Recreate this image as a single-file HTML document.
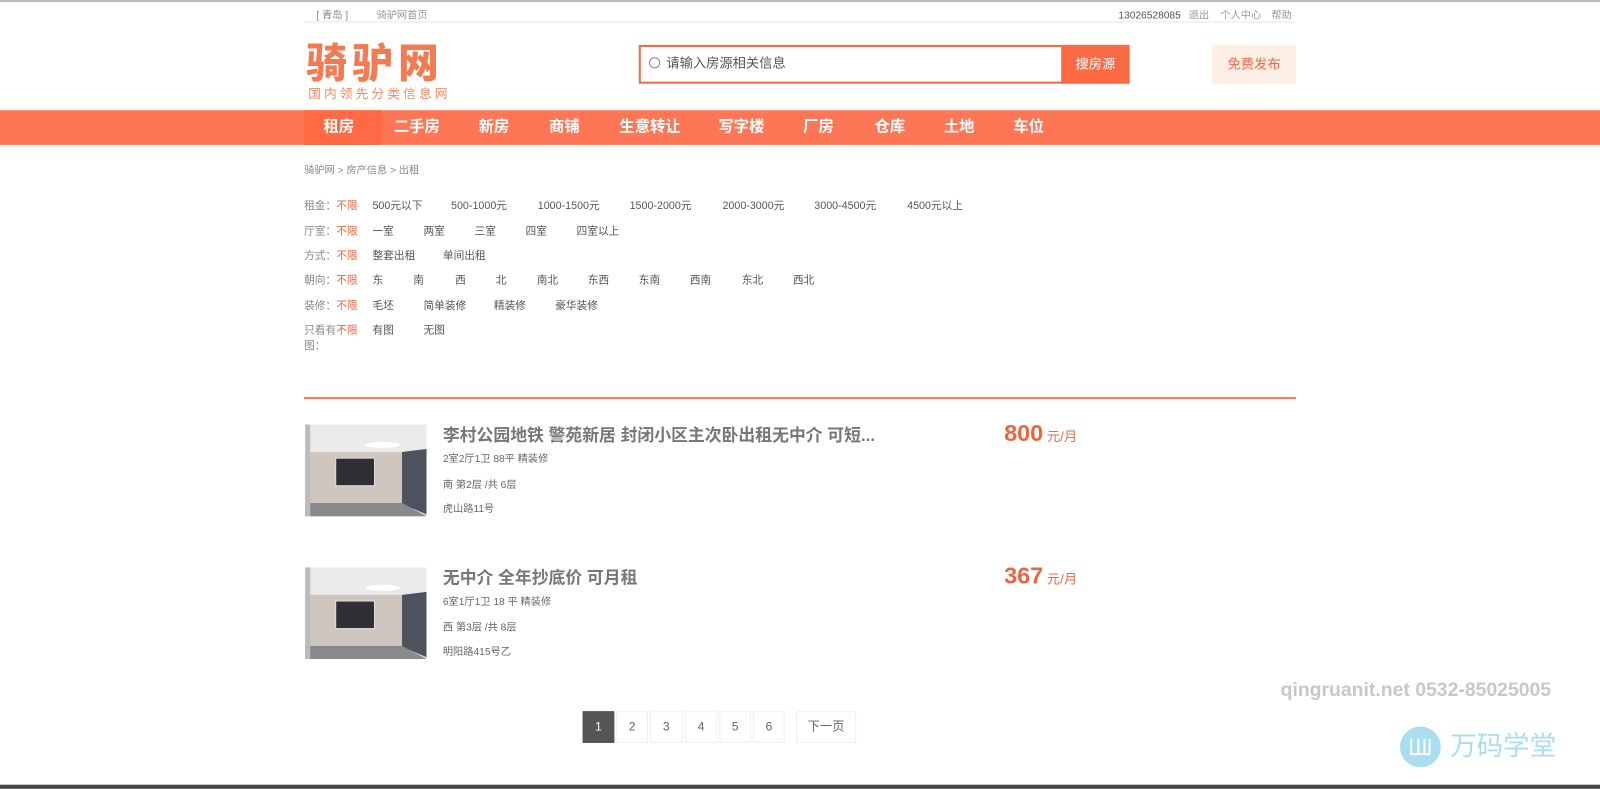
<!DOCTYPE html>
<html><head><meta charset="utf-8"><style>
*{margin:0;padding:0;box-sizing:border-box}
body{width:1600px;height:788px;position:relative;background:#fff;font-family:"Liberation Sans","Noto Sans CJK SC",sans-serif;overflow:hidden;color:#555}
#w{position:absolute;left:0;top:0;width:1568px;height:772px;transform:scale(1.0204);transform-origin:0 0}
.a{position:absolute;white-space:nowrap}
.s{font-size:10px;color:#666;line-height:12px}
.nav span{position:absolute;top:0;line-height:34px;color:#fff;font-weight:bold;font-size:15px}
.row{position:absolute;left:298px;font-size:10.5px;color:#555;line-height:12px}
.row span{position:absolute;white-space:nowrap}
.row .l{left:0;color:#888}
.row .l b{font-weight:normal;color:#f0643c}
.pg{position:absolute;top:697px;height:31px;border:1px solid #eee;text-align:center;line-height:29px;font-size:12px;color:#666}
.t{font-size:16.5px;font-weight:bold;color:#777;line-height:22px}
</style></head><body><div id="w">
<div class="a" style="left:0;top:0;width:1600px;height:2px;background:#bbb"></div>
<div class="a s" style="left:310px;top:10px;color:#888">[ 青岛 ]</div>
<div class="a s" style="left:369px;top:10px;color:#999">骑驴网首页</div>
<div class="a" style="left:298px;top:21px;width:972px;height:1px;background:#e6e6e6"></div>
<div class="a s" style="left:1096px;top:10px;color:#555">13026528085</div>
<div class="a s" style="left:1165px;top:10px;color:#999">退出</div>
<div class="a s" style="left:1196px;top:10px;color:#999">个人中心</div>
<div class="a s" style="left:1246px;top:10px;color:#999">帮助</div>

<div class="a" style="left:300px;top:40px;font-size:40px;font-weight:900;color:#f47a52;letter-spacing:5px;line-height:46px">骑驴网</div>
<div class="a" style="left:302px;top:84px;font-size:12.5px;color:#f58a66;letter-spacing:3px;line-height:16px">国内领先分类信息网</div>

<div class="a" style="left:626px;top:44px;width:481px;height:38px;border:2px solid #f06a46;background:#fff"></div>
<div class="a" style="left:636px;top:56px;width:11px;height:11px;border:1px solid #888;border-radius:50%"></div>
<div class="a" style="left:653px;top:54px;font-size:13px;color:#555;line-height:16px">请输入房源相关信息</div>
<div class="a" style="left:1040px;top:44px;width:67px;height:38px;background:#fa6a45;color:#fff;font-size:13px;text-align:center;line-height:38px">搜房源</div>
<div class="a" style="left:1188px;top:44px;width:82px;height:38px;background:#fdeee6;color:#f06a46;font-size:13px;text-align:center;line-height:38px">免费发布</div>

<div class="a nav" style="left:0;top:108px;width:1600px;height:34px;background:#ff7657">
<div class="a" style="left:298px;top:0;width:76px;height:34px;background:#ff6a45"></div>
<span style="left:317px">租房</span><span style="left:386px">二手房</span><span style="left:469px">新房</span><span style="left:538px">商铺</span><span style="left:607px">生意转让</span><span style="left:704px">写字楼</span><span style="left:787px">厂房</span><span style="left:857px">仓库</span><span style="left:925px">土地</span><span style="left:993px">车位</span>
</div>

<div class="a s" style="left:298px;top:162px;color:#888">骑驴网 &gt; 房产信息 &gt; 出租</div>

<div class="row" style="top:196px"><span class="l">租金：<b>不限</b></span><span style="left:67px">500元以下</span><span style="left:144px">500-1000元</span><span style="left:229px">1000-1500元</span><span style="left:319px">1500-2000元</span><span style="left:410px">2000-3000元</span><span style="left:500px">3000-4500元</span><span style="left:591px">4500元以上</span></div>
<div class="row" style="top:221px"><span class="l">厅室：<b>不限</b></span><span style="left:67px">一室</span><span style="left:117px">两室</span><span style="left:167px">三室</span><span style="left:217px">四室</span><span style="left:267px">四室以上</span></div>
<div class="row" style="top:245px"><span class="l">方式：<b>不限</b></span><span style="left:67px">整套出租</span><span style="left:136px">单间出租</span></div>
<div class="row" style="top:269px"><span class="l">朝向：<b>不限</b></span><span style="left:67px">东</span><span style="left:107px">南</span><span style="left:148px">西</span><span style="left:188px">北</span><span style="left:228px">南北</span><span style="left:278px">东西</span><span style="left:328px">东南</span><span style="left:378px">西南</span><span style="left:429px">东北</span><span style="left:479px">西北</span></div>
<div class="row" style="top:294px"><span class="l">装修：<b>不限</b></span><span style="left:67px">毛坯</span><span style="left:117px">简单装修</span><span style="left:186px">精装修</span><span style="left:246px">豪华装修</span></div>
<div class="row" style="top:318px"><span class="l">只看有<b>不限</b></span><span class="l" style="top:15px">图：</span><span style="left:67px">有图</span><span style="left:117px">无图</span></div>

<div class="a" style="left:298px;top:389px;width:972px;height:2px;background:#fa7a5a"></div>

<svg class="a" style="left:299px;top:416px" width="119" height="90" viewBox="0 0 119 90">
<rect width="119" height="90" fill="#d6d4d0"/><polygon points="0,0 119,0 119,27 0,27" fill="#eaeaea"/>
<polygon points="0,27 95,27 95,77 0,77" fill="#cfc7bf"/><polygon points="95,27 119,24 119,88 95,78" fill="#4d525c"/>
<polygon points="0,77 95,77 119,90 0,90" fill="#8a8a8c"/><rect x="30" y="33" width="38" height="27" fill="#2f3036" stroke="#ddd"/>
<ellipse cx="76" cy="20" rx="17" ry="3" fill="#fff"/><rect x="0" y="0" width="5" height="90" fill="#bbb"/></svg>
<div class="a t" style="left:434px;top:416px">李村公园地铁 警苑新居 封闭小区主次卧出租无中介 可短...</div>
<div class="a s" style="left:434px;top:445px">2室2厅1卫 88平 精装修</div>
<div class="a s" style="left:434px;top:470px">南 第2层 /共 6层</div>
<div class="a s" style="left:434px;top:494px">虎山路11号</div>
<div class="a" style="left:984px;top:410px;font-size:23px;font-weight:bold;color:#f0643c;line-height:28px">800<span style="font-size:13px;font-weight:normal;color:#f06a46"> 元/月</span></div>

<svg class="a" style="left:299px;top:556px" width="119" height="90" viewBox="0 0 119 90">
<rect width="119" height="90" fill="#d6d4d0"/><polygon points="0,0 119,0 119,27 0,27" fill="#eaeaea"/>
<polygon points="0,27 95,27 95,77 0,77" fill="#cfc7bf"/><polygon points="95,27 119,24 119,88 95,78" fill="#4d525c"/>
<polygon points="0,77 95,77 119,90 0,90" fill="#8a8a8c"/><rect x="30" y="33" width="38" height="27" fill="#2f3036" stroke="#ddd"/>
<ellipse cx="76" cy="20" rx="17" ry="3" fill="#fff"/><rect x="0" y="0" width="5" height="90" fill="#bbb"/></svg>
<div class="a t" style="left:434px;top:556px">无中介 全年抄底价 可月租</div>
<div class="a s" style="left:434px;top:585px">6室1厅1卫 18 平 精装修</div>
<div class="a s" style="left:434px;top:610px">西 第3层 /共 8层</div>
<div class="a s" style="left:434px;top:634px">明阳路415号乙</div>
<div class="a" style="left:984px;top:550px;font-size:23px;font-weight:bold;color:#f0643c;line-height:28px">367<span style="font-size:13px;font-weight:normal;color:#f06a46"> 元/月</span></div>

<div class="pg" style="left:571px;width:31px;background:#555;color:#fff;border-color:#555">1</div>
<div class="pg" style="left:604px;width:31px">2</div>
<div class="pg" style="left:637px;width:32px">3</div>
<div class="pg" style="left:671px;width:32px">4</div>
<div class="pg" style="left:705px;width:31px">5</div>
<div class="pg" style="left:738px;width:31px">6</div>
<div class="pg" style="left:780px;width:59px">下一页</div>

<div class="a" style="left:1255px;top:666px;font-size:19px;font-weight:bold;color:#c8c8c8;line-height:22px">qingruanit.net 0532-85025005</div>
<div class="a" style="left:1372px;top:712px;width:40px;height:40px;border-radius:50%;background:#a8def0"></div>
<div class="a" style="left:1382px;top:724px;width:20px;height:16px;border:2px solid #fff;border-top:none"></div>
<div class="a" style="left:1389px;top:724px;width:2px;height:14px;background:#fff"></div>
<div class="a" style="left:1395px;top:724px;width:2px;height:14px;background:#fff"></div>
<div class="a" style="left:1421px;top:714px;font-size:26px;color:#a8def0;line-height:34px">万码学堂</div>
<div class="a" style="left:0;top:769px;width:1600px;height:4px;background:#444"></div>
</div></body></html>
